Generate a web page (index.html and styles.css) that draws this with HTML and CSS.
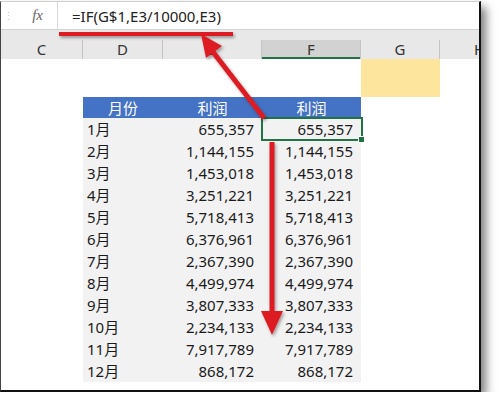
FILE: index.html
```html
<!DOCTYPE html>
<html>
<head>
<meta charset="utf-8">
<link rel="stylesheet" href="styles.css">
</head>
<body>
<div class="win">
  <div class="fbar">
    <div class="namebox"><span class="dots">⋮</span><span class="fx">fx</span></div>
    <div class="formula">=IF(G$1,E3/10000,E3)</div>
  </div>
  <div class="strip"></div>
  <div class="colhead">
    <div class="ch c1">C</div>
    <div class="ch c2">D</div>
    <div class="ch c3">E</div>
    <div class="ch c4 sel">F</div>
    <div class="ch c5">G</div>
    <div class="ch c6">H</div>
  </div>
  <div class="sheet">
    <div class="cell"></div><div class="cell"></div><div class="cell"></div><div class="cell"></div><div class="cell yellow"></div><div class="cell"></div>

    <div class="cell"></div><div class="th">月份</div><div class="th">利润</div><div class="th">利润</div><div class="cell"></div><div class="cell"></div>

    <div class="cell"></div><div class="td m">1月</div><div class="td n">655,357</div><div class="td n active">655,357<span class="handle"></span></div><div class="cell"></div><div class="cell"></div>
    <div class="cell"></div><div class="td m">2月</div><div class="td n">1,144,155</div><div class="td n">1,144,155</div><div class="cell"></div><div class="cell"></div>
    <div class="cell"></div><div class="td m">3月</div><div class="td n">1,453,018</div><div class="td n">1,453,018</div><div class="cell"></div><div class="cell"></div>
    <div class="cell"></div><div class="td m">4月</div><div class="td n">3,251,221</div><div class="td n">3,251,221</div><div class="cell"></div><div class="cell"></div>
    <div class="cell"></div><div class="td m">5月</div><div class="td n">5,718,413</div><div class="td n">5,718,413</div><div class="cell"></div><div class="cell"></div>
    <div class="cell"></div><div class="td m">6月</div><div class="td n">6,376,961</div><div class="td n">6,376,961</div><div class="cell"></div><div class="cell"></div>
    <div class="cell"></div><div class="td m">7月</div><div class="td n">2,367,390</div><div class="td n">2,367,390</div><div class="cell"></div><div class="cell"></div>
    <div class="cell"></div><div class="td m">8月</div><div class="td n">4,499,974</div><div class="td n">4,499,974</div><div class="cell"></div><div class="cell"></div>
    <div class="cell"></div><div class="td m">9月</div><div class="td n">3,807,333</div><div class="td n">3,807,333</div><div class="cell"></div><div class="cell"></div>
    <div class="cell"></div><div class="td m">10月</div><div class="td n">2,234,133</div><div class="td n">2,234,133</div><div class="cell"></div><div class="cell"></div>
    <div class="cell"></div><div class="td m">11月</div><div class="td n">7,917,789</div><div class="td n">7,917,789</div><div class="cell"></div><div class="cell"></div>
    <div class="cell"></div><div class="td m">12月</div><div class="td n">868,172</div><div class="td n">868,172</div><div class="cell"></div><div class="cell"></div>
  </div>
  <svg class="overlay" width="480" height="390" viewBox="0 0 480 390">
    <defs>
      <filter id="sh" x="-20%" y="-20%" width="140%" height="140%">
        <feDropShadow dx="1.5" dy="2" stdDeviation="1.5" flood-color="#000" flood-opacity="0.35"/>
      </filter>
    </defs>
    <g filter="url(#sh)" fill="#dc1c24" stroke="none">
      <rect x="58" y="30" width="174" height="4"/>
      <line x1="212" y1="50" x2="263" y2="116" stroke="#dc1c24" stroke-width="5"/>
      <polygon points="200,32 205,56 221,44"/>
      <rect x="268.5" y="140" width="5" height="172"/>
      <polygon points="260,309 282,309 271,333"/>
    </g>
  </svg>
</div>
</body>
</html>
```
FILE: styles.css
```css
html, body {
  margin: 0;
  padding: 0;
  background: #fff;
}
body {
  font-family: "Noto Sans", "Noto Sans CJK SC", sans-serif;
  font-size: 15px;
  color: #1a1a1a;
}
.win {
  position: relative;
  width: 478px;
  height: 388px;
  margin-top: 1px;
  border-top: 1px solid #cfcfcf;
  border-left: 1px solid #444;
  border-right: 2px solid #111;
  border-bottom: 2px solid #111;
  box-shadow: 5px 6px 9px rgba(0, 0, 0, 0.5);
  overflow: hidden;
  background: #fff;
}
.fbar {
  display: flex;
  height: 27px;
  border-bottom: 1px solid #d4d4d4;
  background: #fff;
}
.namebox {
  width: 57px;
  display: flex;
  align-items: center;
  justify-content: space-between;
  padding: 0 14px 0 2px;
  box-sizing: border-box;
  border-right: 1px solid #dadada;
}
.dots {
  color: #c8c8c8;
  font-size: 11px;
}
.fx {
  font-family: "Liberation Serif", serif;
  font-style: italic;
  font-size: 15px;
  color: #666;
}
.formula {
  flex: 1;
  display: flex;
  align-items: center;
  padding-left: 14px;
  color: #222;
  font-size: 15px;
}
.strip {
  height: 10px;
  background: #e8e8e8;
}
.colhead {
  display: grid;
  grid-template-columns: 82px 80px 99px 99px 79px 80px;
  height: 19px;
  background: #e8e8e8;
}
.ch {
  display: flex;
  align-items: center;
  justify-content: center;
  border-right: 1px solid #c4c4c4;
  color: #333;
  font-size: 15px;
  line-height: 19px;
}
.ch.sel {
  background: #d2d2d2;
  box-shadow: inset 0 -2px 0 #217346;
}
.sheet {
  display: grid;
  grid-template-columns: 82px 80px 99px 99px 79px 80px;
  grid-template-rows: 38px 21px repeat(12, 22px);
}
.yellow {
  background: #fde59d;
}
.th {
  background: #4472c4;
  color: #fff;
  display: flex;
  align-items: center;
  justify-content: center;
}
.td {
  background: #f2f2f2;
  display: flex;
  align-items: center;
  line-height: 22px;
}
.td.m {
  padding-left: 4px;
}
.td.n {
  justify-content: flex-end;
  padding-right: 8px;
}
.active {
  position: relative;
}
.active::after {
  content: "";
  position: absolute;
  left: -1px;
  top: -1px;
  right: -2px;
  bottom: -1px;
  border: 2px solid #217346;
}
.handle {
  position: absolute;
  right: -4px;
  bottom: -3px;
  width: 5px;
  height: 5px;
  background: #217346;
  border: 1px solid #fff;
  z-index: 2;
}
.overlay {
  position: absolute;
  left: 0;
  top: 0;
  pointer-events: none;
}
```
